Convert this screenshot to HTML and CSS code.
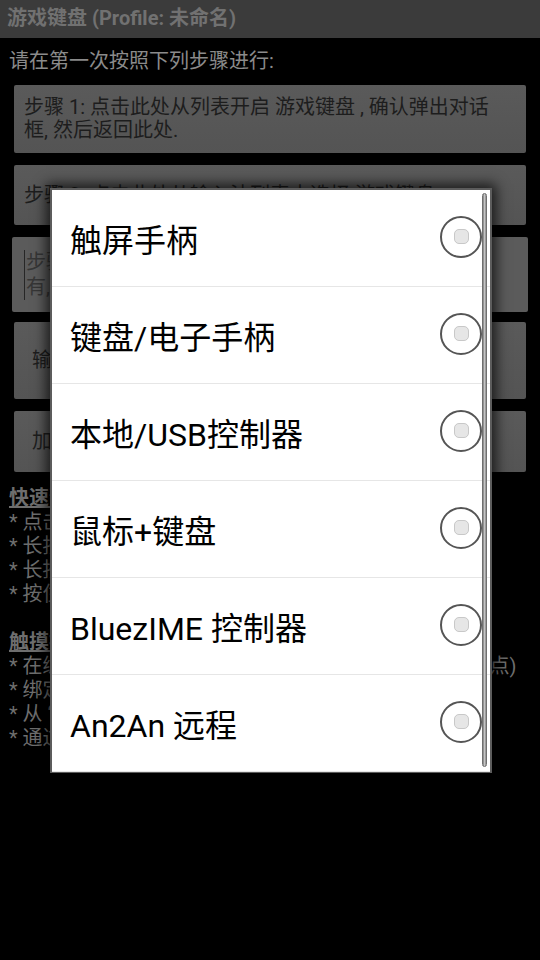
FILE: index.html
```html
<!DOCTYPE html>
<html lang="zh-CN">
<head>
<meta charset="utf-8">
<title>游戏键盘</title>
<link rel="stylesheet" href="styles.css">
</head>
<body>
<div class="screen">
  <header class="titlebar">游戏键盘 (Profile: 未命名)</header>
  <main class="content">
    <p class="intro">请在第一次按照下列步骤进行:</p>
    <div class="steps">
      <div class="btn step1">步骤 1: 点击此处从列表开启 游戏键盘 , 确认弹出对话<br>框, 然后返回此处.</div>
      <div class="btn step2">步骤 2: 点击此处从输入法列表中选择 游戏键盘.</div>
      <div class="field"><span class="field-text">步骤 3: 在此处输入文字以测试键盘是否工作<br>有, 可以开始使用了.</span></div>
      <div class="btn wide tall">输入法设置</div>
      <div class="btn wide short">加载 / 保存配置</div>
    </div>
    <div class="help">
      <div class="head">快速帮助:</div>
      <div>* 点击菜单按钮打开设置</div>
      <div>* 长按屏幕空白处添加按键</div>
      <div>* 长按按键可以编辑或删除</div>
      <div>* 按住按键拖动可以移动位置</div>
      <div class="blank">&nbsp;</div>
      <div class="head">触摸控件:</div>
      <div>* 在编辑模式下拖动控件可以改变其位置(长按添加触摸点)</div>
      <div>* 绑定按键到屏幕上的触摸区域</div>
      <div>* 从 “菜单” 中选择控件类型</div>
      <div>* 通过设置调整控件大小和透明度</div>
    </div>
  </main>

  <div class="dialog">
    <div class="option"><span>触屏手柄</span><span class="radio"></span></div>
    <div class="option"><span>键盘/电子手柄</span><span class="radio"></span></div>
    <div class="option"><span>本地/USB控制器</span><span class="radio"></span></div>
    <div class="option"><span>鼠标+键盘</span><span class="radio"></span></div>
    <div class="option"><span>BluezIME 控制器</span><span class="radio"></span></div>
    <div class="option"><span>An2An 远程</span><span class="radio"></span></div>
    <div class="scrollbar"></div>
  </div>
</div>
</body>
</html>
```

FILE: styles.css
```css
html, body {
  margin: 0;
  padding: 0;
  background: #000;
}

body {
  font-family: Roboto, "Noto Sans CJK SC", sans-serif;
}

.screen {
  position: relative;
  width: 540px;
  height: 960px;
  overflow: hidden;
  background: #000;
}

.titlebar {
  height: 38px;
  box-sizing: border-box;
  background: #3b3b3b;
  color: #717171;
  font-weight: bold;
  font-size: 20px;
  line-height: 36px;
  padding-left: 7px;
  white-space: nowrap;
}

.intro {
  margin: 0;
  height: 47px;
  line-height: 46px;
  padding: 0 9px;
  font-size: 20px;
  color: #8b8b8b;
  white-space: nowrap;
}

.steps {
  display: flex;
  flex-direction: column;
  padding: 0 14px;
}

.btn {
  display: flex;
  align-items: center;
  box-sizing: border-box;
  background: linear-gradient(to bottom, #5a5a5a, #545454);
  color: #1d1d1d;
  font-size: 20px;
  line-height: 23px;
  border-radius: 2px;
  padding: 0 10px;
  white-space: nowrap;
  overflow: hidden;
}

.step1 {
  height: 68px;
  margin-bottom: 12px;
}

.step2 {
  height: 60px;
  margin-bottom: 12px;
}

.field {
  display: flex;
  align-items: center;
  box-sizing: border-box;
  height: 75px;
  margin: 0 -2px 10px;
  padding: 0 12px;
  background: #5b5b5b;
  border-radius: 2px;
  color: #363636;
  font-size: 20px;
  line-height: 25px;
  white-space: nowrap;
  overflow: hidden;
}

.field-text {
  border-left: 1px solid #262626;
  padding-left: 1px;
}

.wide {
  padding-left: 18px;
}

.tall {
  height: 77px;
  margin-bottom: 12px;
}

.short {
  height: 61px;
}

.help {
  margin-top: 14px;
  padding: 0 9px;
  font-size: 20px;
  line-height: 24px;
  color: #6e6e6e;
  white-space: nowrap;
}

.help .head {
  font-weight: bold;
  text-decoration: underline;
}

/* Modal dialog lying over the page */
.dialog {
  position: absolute;
  left: 50px;
  top: 188px;
  width: 442px;
  height: 585px;
  box-sizing: border-box;
  border: 2px solid #5c5c5c;
  background: #fff;
  box-shadow: 0 0 12px 4px rgba(0, 0, 0, 0.7);
  display: flex;
  flex-direction: column;
}

.option {
  height: 97px;
  flex: none;
  box-sizing: border-box;
  display: flex;
  align-items: center;
  justify-content: space-between;
  padding: 0 8px 0 18px;
  border-bottom: 1px solid #e6e6e6;
  font-size: 32px;
  color: #000;
  white-space: nowrap;
}

.option:last-of-type {
  border-bottom: none;
}

.radio {
  flex: none;
  width: 42px;
  height: 42px;
  box-sizing: border-box;
  border: 2px solid #555;
  border-radius: 50%;
  background: #fff;
  display: flex;
  align-items: center;
  justify-content: center;
  margin-top: -3px;
}

.radio::after {
  content: "";
  width: 15px;
  height: 15px;
  box-sizing: border-box;
  border-radius: 5px;
  background: #e6e6e6;
  border: 1px solid #c8c8c8;
}

.scrollbar {
  position: absolute;
  right: 3px;
  top: 3px;
  bottom: 4px;
  width: 5px;
  border-radius: 3px;
  background: linear-gradient(to right, #7a7a7a, #c4c4c4 50%, #8a8a8a);
  border: 1px solid #6f6f6f;
  box-sizing: border-box;
}
```
